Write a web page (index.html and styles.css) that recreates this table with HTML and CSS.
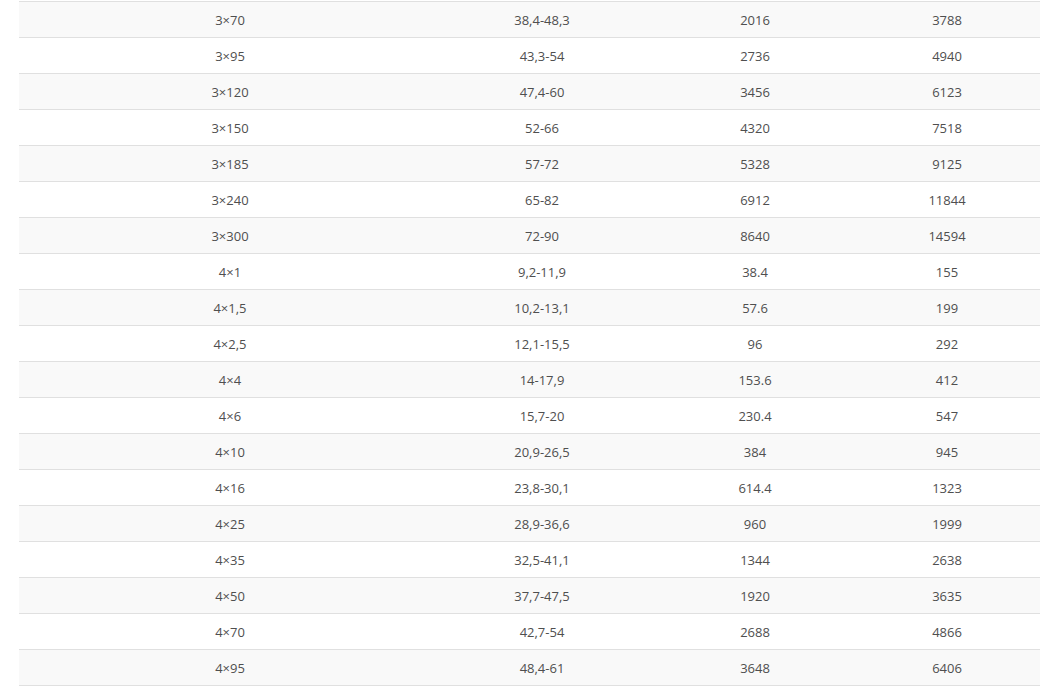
FILE: index.html
```html
<!DOCTYPE html>
<html>
<head>
<meta charset="utf-8">
<link rel="stylesheet" href="styles.css">
</head>
<body>
<div class="table">
  <div class="row alt"><span>3×70</span><span>38,4-48,3</span><span>2016</span><span>3788</span></div>
  <div class="row"><span>3×95</span><span>43,3-54</span><span>2736</span><span>4940</span></div>
  <div class="row alt"><span>3×120</span><span>47,4-60</span><span>3456</span><span>6123</span></div>
  <div class="row"><span>3×150</span><span>52-66</span><span>4320</span><span>7518</span></div>
  <div class="row alt"><span>3×185</span><span>57-72</span><span>5328</span><span>9125</span></div>
  <div class="row"><span>3×240</span><span>65-82</span><span>6912</span><span>11844</span></div>
  <div class="row alt"><span>3×300</span><span>72-90</span><span>8640</span><span>14594</span></div>
  <div class="row"><span>4×1</span><span>9,2-11,9</span><span>38.4</span><span>155</span></div>
  <div class="row alt"><span>4×1,5</span><span>10,2-13,1</span><span>57.6</span><span>199</span></div>
  <div class="row"><span>4×2,5</span><span>12,1-15,5</span><span>96</span><span>292</span></div>
  <div class="row alt"><span>4×4</span><span>14-17,9</span><span>153.6</span><span>412</span></div>
  <div class="row"><span>4×6</span><span>15,7-20</span><span>230.4</span><span>547</span></div>
  <div class="row alt"><span>4×10</span><span>20,9-26,5</span><span>384</span><span>945</span></div>
  <div class="row"><span>4×16</span><span>23,8-30,1</span><span>614.4</span><span>1323</span></div>
  <div class="row alt"><span>4×25</span><span>28,9-36,6</span><span>960</span><span>1999</span></div>
  <div class="row"><span>4×35</span><span>32,5-41,1</span><span>1344</span><span>2638</span></div>
  <div class="row alt"><span>4×50</span><span>37,7-47,5</span><span>1920</span><span>3635</span></div>
  <div class="row"><span>4×70</span><span>42,7-54</span><span>2688</span><span>4866</span></div>
  <div class="row alt"><span>4×95</span><span>48,4-61</span><span>3648</span><span>6406</span></div>
</div>
</body>
</html>
```
FILE: styles.css
```css
html, body {
  margin: 0;
  padding: 0;
  background: #ffffff;
}
body {
  font-family: "Open Sans", "Noto Sans", sans-serif;
  font-size: 13px;
  color: #4f4f4f;
}
.table {
  margin: 1px 19px 0 19px;
  width: 1021px;
  border-top: 1px solid #e0e0e0;
}
.row {
  display: grid;
  grid-template-columns: 422px 202px 224px 160px;
  padding-right: 13px;
  height: 35px;
  border-bottom: 1px solid #e0e0e0;
  background: #ffffff;
}
.row.alt {
  background: #f9f9f9;
}
.row span {
  text-align: center;
  padding-top: 1px;
  line-height: 35px;
  height: 34px;
}
```
